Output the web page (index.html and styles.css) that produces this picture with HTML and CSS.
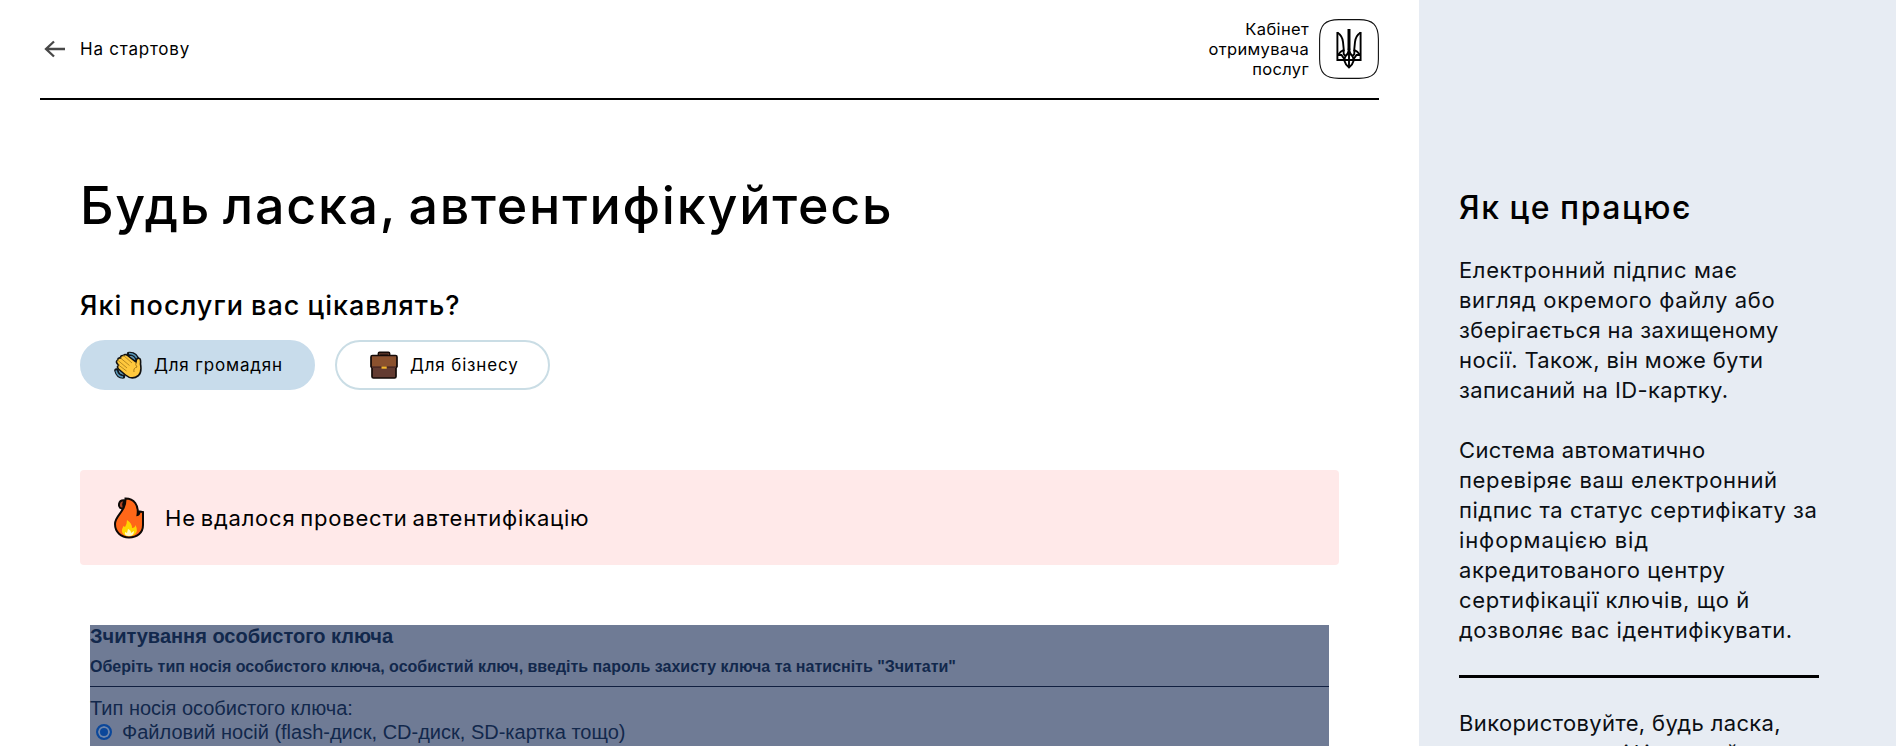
FILE: index.html
```html
<!DOCTYPE html>
<html lang="uk">
<head>
<meta charset="utf-8">
<title>Кабінет отримувача послуг</title>
<link rel="stylesheet" href="styles.css">
</head>
<body>
<div class="page">
  <main class="main">
    <header class="header">
      <a class="back">
        <svg class="back-icon" viewBox="0 0 22 18"><path d="M21 9H2M10 1.500L2 9l8 7.500" fill="none" stroke="#484848" stroke-width="2.300"/></svg>
        <span class="t back-text">На стартову</span>
      </a>
      <div class="brand">
        <div class="brand-text"><span class="t">Кабінет</span><span class="t">отримувача</span><span class="t">послуг</span></div>
        <svg class="brand-icon" viewBox="0 0 60 60">
          <path d="M20 .6H40C54 .6 59.400 6 59.400 20V40C59.400 54 54 59.400 40 59.400H20C6 59.400 .6 54 .6 40V20C.6 6 6 .6 20 .6Z" fill="#fff" stroke="#111" stroke-width="1.100"/>
          <g fill="none" stroke="#000" stroke-width="1.900">
            <path d="M18.400 13V41H41.600V13"/>
            <path d="M18.400 13.500Q23.500 17 24 23L24.800 31Q21.500 32 19 36M41.600 13.500Q36.500 17 36 23L35.200 31Q38.500 32 41 36"/>
            <path d="M24.800 31Q24 37 27 36.500Q29.500 35 30 28Q30.500 35 33 36.500Q36 37 35.200 31"/>
            <path d="M30 34Q25 37 25.500 42Q26.500 46 30 48.500Q33.500 46 34.500 42Q35 37 30 34Z"/>
            <path d="M30 33V48M18.400 36H22.500L26 41M41.600 36H37.500L34 41"/>
            <path d="M30 10V31" stroke-width="3"/>
          </g>
        </svg>
      </div>
    </header>
    <section class="content">
      <h1 class="title"><span class="t">Будь ласка, автентифікуйтесь</span></h1>
      <h2 class="question"><span class="t">Які послуги вас цікавлять?</span></h2>
      <div class="tabs">
        <button class="tab tab-active">
          <svg class="tab-icon" viewBox="0 0 28 28">
            <g fill="none" stroke="#10151b" stroke-width="4.600" stroke-linecap="round"><path d="M15 3Q22 2.500 23.500 10M2.500 19.500Q4 25.500 9 25.500"/></g>
            <g fill="none" stroke="#5796b8" stroke-width="1.500"><path d="M15 2.500Q22 2.500 24 10M2 19.500Q3.500 25.500 9 26M17 5.500Q20 6.500 21 10M5.500 19.500Q6 22 9 23"/></g>
            <path d="M3.500 9Q4 6.500 6.500 7Q6.500 4 9.500 4.500Q11 2.500 13.500 4.500L22 11Q22.500 6 25.500 7.500Q27 8 26.500 13Q28 21 24.500 24.500Q18 29.500 11.500 24L4.500 18Q2.500 16 4.500 14Q1 11 3.500 9Z" fill="#ffc83d" stroke="#111" stroke-width="1.600"/>
            <path d="M6.500 7L15.500 14.500M9.500 4.500L18 12M4.500 14L12.500 20M3.500 9L13 17" fill="none" stroke="#b88a20" stroke-width="1"/><path d="M22 11Q21 14 23 16Q19 17 20 21" fill="none" stroke="#a97b19"/>
          </svg><span class="t">Для громадян</span>
        </button>
        <button class="tab tab-business">
          <svg class="tab-icon" viewBox="0 0 28 28">
            <path d="M9.500 5V2.500H18.500V5" fill="none" stroke="#150b08" stroke-width="3.800" stroke-linejoin="round"/><path d="M9.500 5V2.800H18.500V5" fill="none" stroke="#6b4030" stroke-width="1.200"/>
            <path d="M2.500 4.500H25.500Q27 4.500 27 6V15.500L26 17V25.500Q26 27 24.500 27H3.500Q2 27 2 25.500V17L1 15.500V6Q1 4.500 2.500 4.500Z" fill="#633b31" stroke="#150b08" stroke-width="1.700"/>
            <path d="M2 5.500H26V15.500H2Z" fill="#8b512e"/><path d="M2 15.500H26V17H2Z" fill="#4d2a24"/><rect x="11.500" y="15.500" width="5.200" height="2.200" fill="#f6b52c"/>
          </svg><span class="t">Для бізнесу</span>
        </button>
      </div>
      <div class="alert">
        <svg class="fire" viewBox="0 0 30 42">
          <path d="M11 12Q4 12 5 7Q6 2.500 11.500 3.500Q7 7 11 12Z" fill="#a94322" stroke="#0d0806" stroke-width="2"/>
          <path d="M11.500 1.500C20 1.500 25 8 23.500 18Q25.500 17.500 25.500 14.500L29 15V28C29 36 23 40.500 15 40.500S1 35 1 27C1 18 12 15 11.500 1.500Z" fill="#ff6718" stroke="#0d0806" stroke-width="2"/>
          <path d="M13 23Q18 26 18 31Q21 31 21.500 28Q25 35 20 38Q15 40.500 10 38Q6 35 9.500 29L11 30Q13 27 13 23Z" fill="#ffd500"/>
          <path d="M14 32Q17 33 17 36L20 34Q20 39 15 39T11 35L13 36Z" fill="#fff9c5"/>
        </svg><span class="t alert-text">Не вдалося провести автентифікацію</span>
      </div>
      <div class="widget">
        <h3 class="widget-title"><span class="t">Зчитування особистого ключа</span></h3>
        <p class="widget-hint"><span class="t">Оберіть тип носія особистого ключа, особистий ключ, введіть пароль захисту ключа та натисніть "Зчитати"</span></p>
        <div class="widget-label"><span class="t">Тип носія особистого ключа:</span></div>
        <div class="option"><span class="radio"></span><span class="t">Файловий носій (flash-диск, CD-диск, SD-картка тощо)</span></div>
      </div>
    </section>
  </main>
  <aside class="aside">
    <h2 class="aside-title"><span class="t">Як це працює</span></h2>
    <p class="info">
      <span class="t wide">Електронний підпис має</span><span class="t wide">вигляд окремого файлу або</span><span class="t snug">зберігається на захищеному</span><span class="t snug">носії. Також, він може бути</span><span class="t snug">записаний на ID-картку.</span>
    </p>
    <p class="info">
      <span class="t snug">Система автоматично</span><span class="t wide">перевіряє ваш електронний</span><span class="t">підпис та статус сертифікату за</span><span class="t wider">інформацією від</span><span class="t">акредитованого центру</span><span class="t wide">сертифікації ключів, що й</span><span class="t">дозволяє вас ідентифікувати.</span>
    </p>
    <hr class="rule">
    <p class="info">
      <span class="t snug">Використовуйте, будь ласка,</span><span class="t tight">виключно кваліфікований</span>
    </p>
  </aside>
</div>
</body>
</html>
```
FILE: styles.css
```css
* { box-sizing: border-box; margin: 0; }
body { background: #fff; color: #000; font-family: Inter, "Noto Sans", sans-serif; overflow: hidden; }
.page { display: flex; width: 1896px; height: 746px; overflow: hidden; }
.t { white-space: nowrap; }
.main { width: 1419px; padding: 0 40px; flex: none; }
.header { height: 100px; display: flex; justify-content: space-between; border-bottom: 2px solid #000; }
.back { display: flex; align-items: center; height: 98px; font-size: 17px; letter-spacing: .77px; }
.back-icon { width: 22px; height: 18px; margin: 0 14px 0 4px; }
.brand { display: flex; padding-top: 19px; gap: 10px; }
.brand-text { display: flex; flex-direction: column; align-items: flex-end; font-size: 16.5px; line-height: 20px; letter-spacing: .35px; }
.brand-icon { width: 60px; height: 60px; }
.content { padding: 0 40px; }
.title { font-size: 52px; line-height: 64px; font-weight: 460; letter-spacing: 1.75px; word-spacing: -4px; margin-top: 74px; }
.question { font-size: 27px; line-height: 36px; font-weight: 460; letter-spacing: 1px; word-spacing: -1px; margin-top: 50px; }
.tabs { display: flex; gap: 20px; margin-top: 16px; }
.tab { display: flex; align-items: center; height: 50px; width: 215px; border: 2px solid #cadde5; border-radius: 25px; background: #fff; font: 17px Inter, sans-serif; letter-spacing: .83px; color: #000; padding: 0 0 0 32px; }
.tab-active { width: 235px; background: #c8dceb; border-color: #c8dceb; }
.tab-icon { width: 28px; height: 28px; margin-right: 12px; flex: none; }
.tab-business { padding-left: 33px; }
.alert { display: flex; align-items: center; height: 95px; margin-top: 80px; padding-left: 34px; background: #ffe9e9; border-radius: 4px; font-size: 22px; letter-spacing: .78px; word-spacing: -2px; }
.fire { width: 30px; height: 42px; margin-right: 21px; }
.widget { margin: 60px 10px 0; height: 130px; background: #6f7b95; color: #12284c; font-family: "Liberation Sans", Arial, sans-serif; }
.widget-title { font-size: 20px; line-height: 22px; font-weight: 700; }
.widget-hint { font-size: 16px; line-height: 18px; font-weight: 700; padding: 11px 0 10px; border-bottom: 1px solid #101f40; }
.widget-label { font-size: 20px; line-height: 22px; padding-top: 10px; }
.option { display: flex; align-items: center; font-size: 20px; line-height: 24px; padding-left: 6px; margin-top: 1px; }
.radio { width: 16px; height: 16px; border: 2px solid #0b479a; border-radius: 50%; margin-right: 10px; background: #0b479a; box-shadow: inset 0 0 0 2px #6f86aa; }
.aside { width: 477px; padding: 0 40px; background: #e7ecf3; flex: none; }
.aside-title { font-size: 32px; line-height: 44px; font-weight: 460; letter-spacing: 1.5px; word-spacing: -1px; margin-top: 186px; margin-bottom: 25px; }
.info { display: flex; flex-direction: column; align-items: flex-start; font-size: 22px; line-height: 30px; letter-spacing: .54px; margin-bottom: 30px; color: #0b0f14; }
.tight { letter-spacing: .1px; }
.snug { letter-spacing: .37px; }
.wide { letter-spacing: .64px; }
.wider { letter-spacing: .88px; }
.rule { width: 360px; height: 3px; background: #000; border: 0; margin: 0 0 30px; }
```
